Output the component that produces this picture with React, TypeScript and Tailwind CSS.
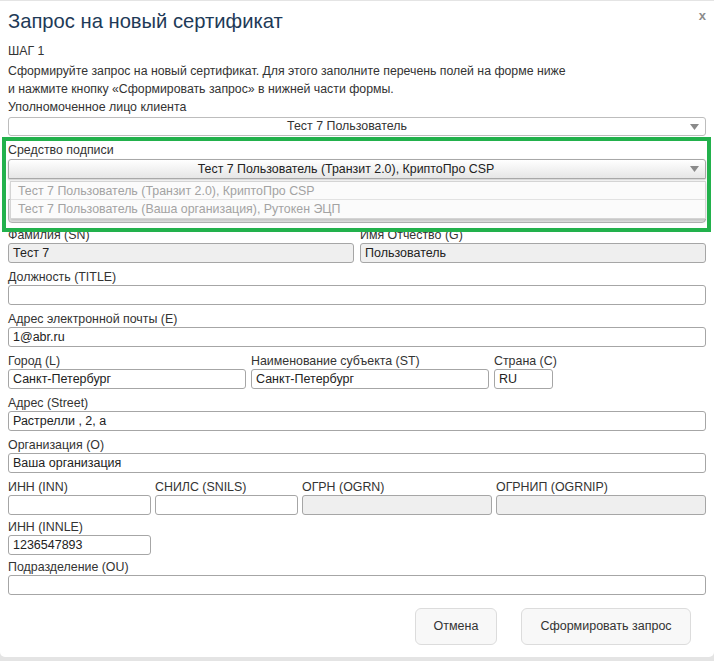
import React from "react";

const font = { fontFamily: '"Liberation Sans", Arial, sans-serif' };

function Arrow() {
  return (
    <svg width="9" height="6" viewBox="0 0 9 6" className="absolute right-[6px] top-1/2 -translate-y-1/2">
      <path d="M0 0 H9 L4.5 6 Z" fill="#8a8a8a" />
    </svg>
  );
}

interface FieldProps {
  label: string;
  value?: string;
  disabled?: boolean;
  className?: string;
}

function Field({ label, value = "", disabled = false, className = "" }: FieldProps) {
  return (
    <div className={`flex flex-col ${className}`}>
      <span className="text-[12.4px] leading-[16px] text-[#333] whitespace-nowrap">{label}</span>
      <div
        className={`h-[20px] border border-[#a6a6a6] rounded-[3px] px-[4px] text-[12.5px] leading-[18px] text-[#222] ${
          disabled ? "bg-[#efefef]" : "bg-white"
        }`}
      >
        {value}
      </div>
    </div>
  );
}

export default function App() {
  return (
    <div className="w-[714px] h-[661px] bg-[#e4e4e4] pt-px overflow-hidden" style={font}>
      <div className="relative h-[656px] bg-white rounded-b-[5px] px-[8px]">
        {/* Header */}
        <div className="flex items-start justify-between pt-[6px]">
          <h1 className="text-[20.2px] leading-[28px] text-[#1e3a57]">Запрос на новый сертификат</h1>
          <span className="text-[13px] font-bold text-[#8c8c8c] mt-[1px] leading-[16px]">x</span>
        </div>

        {/* Intro */}
        <div className="mt-[7px] text-[12.3px] text-[#333]">
          <div className="leading-[18px] mb-[2px]">ШАГ 1</div>
          <div className="leading-[18px]">
            Сформируйте запрос на новый сертификат. Для этого заполните перечень полей на форме ниже
          </div>
          <div className="leading-[18px]">и нажмите кнопку «Сформировать запрос» в нижней части формы.</div>
          <div className="leading-[18px] text-[12.4px]">Уполномоченное лицо клиента</div>
        </div>

        <div className="relative h-[19px] mt-px pr-[20px] border border-[#bdbdbd] rounded-[3px] bg-white text-center text-[12.4px] leading-[17px] text-[#333]">
          Тест 7 Пользователь
          <Arrow />
        </div>

        {/* Signature tool */}
        <div className="mt-[5px] text-[12.4px] leading-[18px] text-[#333]">Средство подписи</div>
        <div className="relative h-[20px] pr-[22px] border border-[#a8a8a8] rounded-t-[3px] bg-gradient-to-b from-white to-[#e6e6e6] shadow-[0_1px_2px_rgba(0,0,0,0.2)] text-center text-[12.4px] leading-[18px] text-[#222]">
          Тест 7 Пользователь (Транзит 2.0), КриптоПро CSP
          <Arrow />
        </div>

        <div className="relative h-[48px]">
          {/* control partly hidden behind the open list */}
          <div className="absolute left-0 right-0 top-[20px] h-[24px] border border-[#b5b5b5] rounded-b-[4px] bg-gradient-to-b from-white to-[#e9e9e9]" />
          <div className="absolute left-[2px] right-0 top-[2px] border border-[#d4d4d4] bg-white shadow-[0_2px_3px_rgba(0,0,0,0.18)] text-[12.4px] text-[#a3a3a3]">
            <div className="h-[18px] leading-[18px] pl-[7px] border-b border-[#e2e2e2] bg-[#fbfbfb]">
              Тест 7 Пользователь (Транзит 2.0), КриптоПро CSP
            </div>
            <div className="h-[18px] leading-[18px] pl-[7px] bg-[#fbfbfb]">
              Тест 7 Пользователь (Ваша организация), Рутокен ЭЦП
            </div>
          </div>
        </div>

        {/* Form fields */}
        <div className="flex flex-col gap-[6px]">
          <div className="flex gap-[6px]">
            <Field label="Фамилия (SN)" value="Тест 7" disabled className="flex-1" />
            <Field label="Имя Отчество (G)" value="Пользователь" disabled className="flex-1" />
          </div>
          <Field label="Должность (TITLE)" />
          <Field label="Адрес электронной почты (E)" value="1@abr.ru" />
          <div className="flex gap-[5px]">
            <Field label="Город (L)" value="Санкт-Петербург" className="w-[238px]" />
            <Field label="Наименование субъекта (ST)" value="Санкт-Петербург" className="w-[238px]" />
            <Field label="Страна (C)" value="RU" className="w-[59px]" />
          </div>
          <Field label="Адрес (Street)" value="Растрелли , 2, а" />
          <Field label="Организация (O)" value="Ваша организация" />
          <div className="flex gap-[4px]">
            <Field label="ИНН (INN)" className="w-[143px]" />
            <Field label="СНИЛС (SNILS)" className="w-[143px]" />
            <Field label="ОГРН (OGRN)" disabled className="w-[190px]" />
            <Field label="ОГРНИП (OGRNIP)" disabled className="flex-1" />
          </div>
          <Field label="ИНН (INNLE)" value="1236547893" className="w-[143px] -mt-[2px]" />
          <Field label="Подразделение (OU)" className="-mt-[2px]" />
        </div>

        {/* Footer */}
        <div className="flex justify-end gap-[24px] mt-[13px] mr-[15px]">
          <button className="w-[82px] h-[37px] rounded-[6px] border border-[#dcdcdc] bg-[#f8f8f8] text-[12.5px] text-[#333]">
            Отмена
          </button>
          <button className="w-[170px] h-[37px] rounded-[6px] border border-[#dcdcdc] bg-[#f8f8f8] text-[12.5px] text-[#333]">
            Сформировать запрос
          </button>
        </div>

        {/* highlight frame drawn over the form */}
        <div className="absolute left-[2px] top-[136px] w-[709px] h-[95px] border-[4px] border-[#22b14c] pointer-events-none" />
      </div>
    </div>
  );
}
